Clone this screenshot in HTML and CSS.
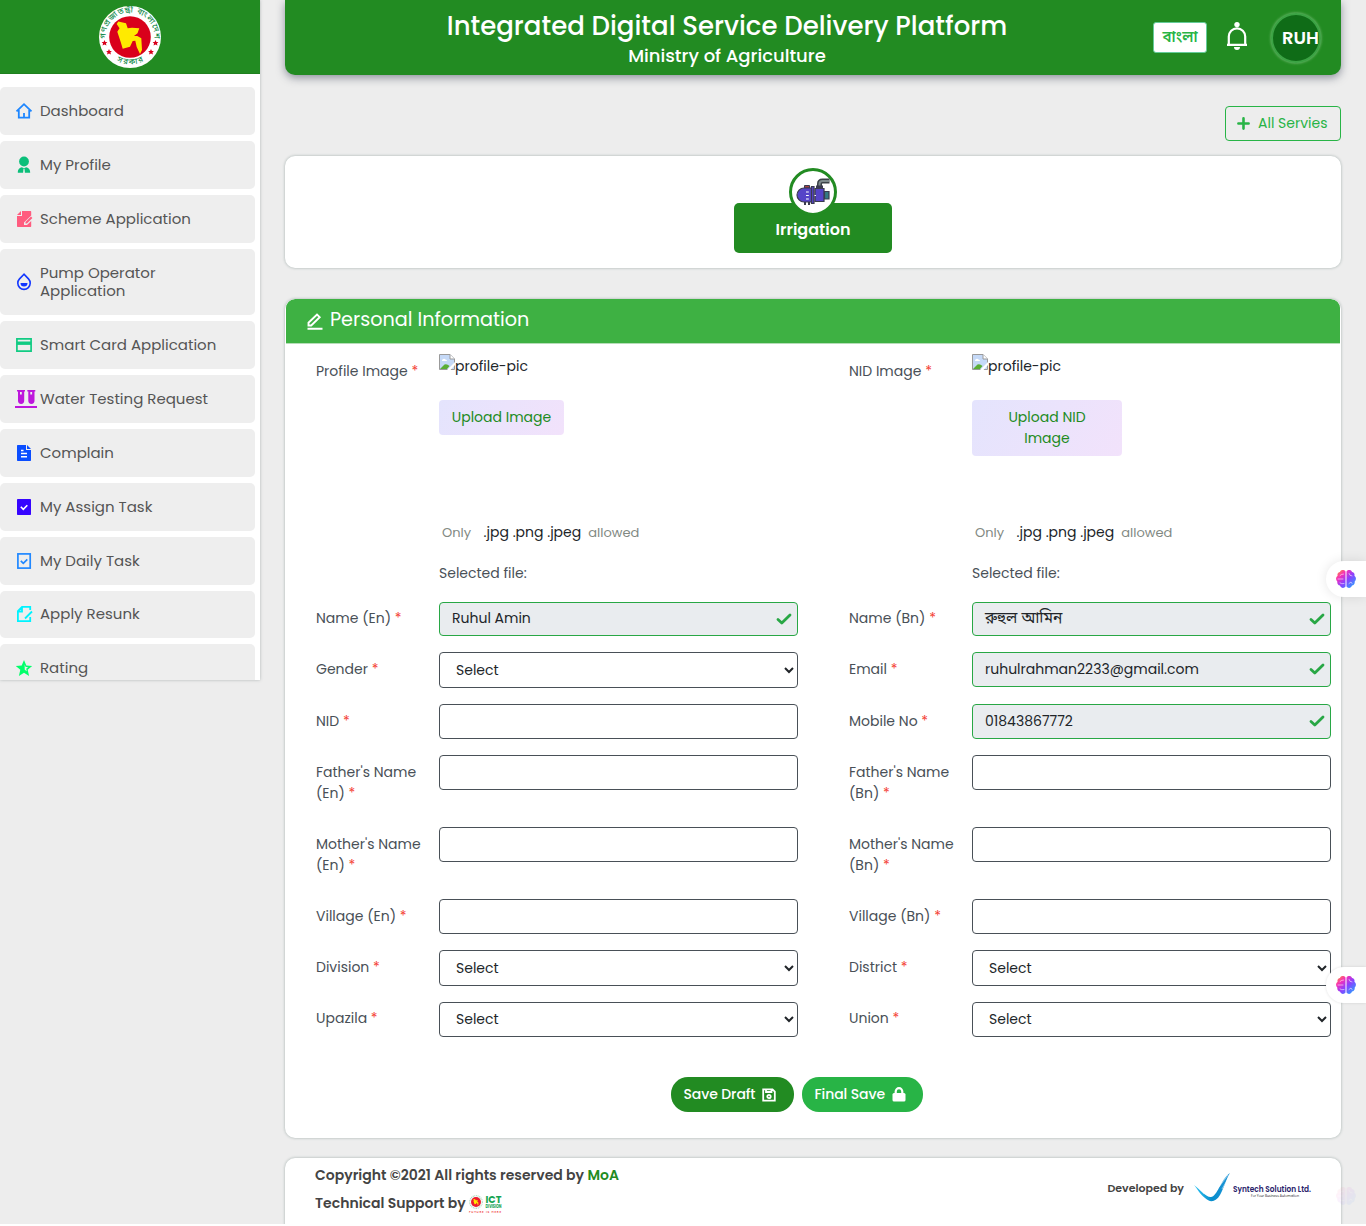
FILE: index.html
```html
<!DOCTYPE html>
<html lang="en">
<head>
<meta charset="utf-8">
<title>Integrated Digital Service Delivery Platform</title>
<link rel="stylesheet" href="styles.css">
</head>
<body>
<svg width="0" height="0" class="defs" aria-hidden="true">
  <defs>
    <linearGradient id="brainfill" x1="0" y1="0" x2="1" y2="1"><stop offset="0" stop-color="#ffa41e"/><stop offset=".28" stop-color="#f62fb8"/><stop offset=".55" stop-color="#8b40ff"/><stop offset="1" stop-color="#16b4ff"/></linearGradient>
    <symbol id="brain" viewBox="0 0 20 20">
      <path fill="url(#brainfill)" d="M9.500 2.500C8 .4 4.800.6 4 3 2 3.200 1 5 1.600 6.800-.4 8.300-.4 11 1.300 12.500 1 14.600 2.200 16.200 4 16.600 4.800 19.400 8.200 19.600 9.500 17.600zM10.500 2.500C12 .4 15.200.6 16 3 18 3.200 19 5 18.400 6.800 20.400 8.300 20.400 11 18.700 12.500 19 14.600 17.800 16.200 16 16.600 15.200 19.400 11.800 19.600 10.500 17.600z"/>
      <path fill="none" stroke="#fff" stroke-opacity=".8" stroke-width=".7" stroke-linecap="round" d="M4 6.500q1.500-1.500 3.500-1.500M2 10h5M4 14q1.500 1.300 4 .6M13 4.500q.3 2.500 3 2.500M13 14.500l2-1.500 1 1.500"/>
    </symbol>
    <symbol id="valid" viewBox="0 0 16 12"><path fill="none" stroke="#28a745" stroke-width="2.800" stroke-linecap="round" stroke-linejoin="round" d="M2 6.500 5.800 10 14 2"/></symbol>
    <symbol id="broken" viewBox="0 0 16 16">
      <path fill="#c5d9f7" stroke="#9a9a9a" d="M.5.5h10.500l4.500 4.500v10.500H.5z"/><path fill="#fff" d="M11 .5V5h4.500zM3 7a2 2 0 0 1 3.500-1.500A1.500 1.500 0 0 1 8 7z"/><path fill="none" stroke="#9a9a9a" d="M11 .5V5h4.500"/><path fill="#5aae36" d="M1 15l4.500-4.500Q8 9.500 10.500 12L8 15z"/><path fill="#fff" d="M8 16l8-8v3l-4.500 5z"/>
    </symbol>
    <path id="land" fill="#ffea00" d="M-11.700-15.500-4-13.700-2.300-8.700 2-9.200 9.300-8.700 7.500-3.700 4-1 7.300-1 11.300 1.300 12 13 10 17 6.700 10 5.300 3.700 2.700 4 0 9.700-7.300 11.700-9.300 5-12.700-5.300-10.500-8.700-13.300-13z"/>
  </defs>
</svg>
<div class="page">
  <aside class="sidebar">
    <div class="brand">
      <svg width="62" height="62" viewBox="-31 -31 62 62">
        <defs><path id="arc-top" d="M-24 5A24.500 24.500 0 1 1 24 5"/><path id="arc-low" d="M-17 21.500A27 27 0 0 0 17 21.500"/></defs>
        <circle r="31" fill="#fff"/><circle r="20.800" fill="#d9001b"/><use href="#land"/>
        <text class="seal"><textPath href="#arc-top" startOffset="50%" text-anchor="middle" textLength="80">গণপ্রজাতন্ত্রী বাংলাদেশ</textPath></text>
        <text class="seal"><textPath href="#arc-low" startOffset="50%" text-anchor="middle" textLength="28">সরকার</textPath></text>
        <g fill="#d9001b"><path id="star" d="M-25.500 3l.9 2h2l-1.500 1.500.6 2.100-2-1.200-2 1.200.6-2.100L-28.400 5h2z"/><use href="#star" x="4.500" y="9"/><use href="#star" x="51"/><use href="#star" x="46.500" y="9"/></g>
      </svg>
    </div>
    <nav class="menu">
      <a class="item"><svg viewBox="0 0 16 16" fill="none" stroke="#1d86ff" stroke-width="1.800"><path d="M.5 8.300 8 1.200l7.500 7.100M2.800 7v7.600h10.400V7M8 15v-5"/></svg><span>Dashboard</span></a>
      <a class="item"><svg viewBox="0 0 16 16" fill="#0bbf7a"><circle cx="8" cy="4.500" r="4.900"/><path d="M1.800 15.700c0-4 2-5 4-5.500l2.200 1 2.200-1c2 .5 4 1.500 4 5.500H8.900l-.4-4h-1l-.4 4z"/></svg><span>My Profile</span></a>
      <a class="item"><svg viewBox="0 0 16 16" fill="#ff5c7f"><path d="M6 0h8.500q.7 0 .7.700V4.500L8 11.500V14h3l4.200-4v5.300q0 .7-.7.700H1.700Q1 16 1 15.300V5h5z"/><path d="M1 4l4-4v4zM9.500 12.500V11L15 5.500l1.400 1.400L11 12.500z"/></svg><span>Scheme Application</span></a>
      <a class="item"><svg viewBox="0 0 16 16"><path fill="none" stroke="#1236ff" stroke-width="1.600" d="M8 .2 3.500 4.900a6.200 6.200 0 1 0 9 0z"/><path fill="#1236ff" d="M4.500 9h7a3.500 3.500 0 0 1-7 0z"/></svg><span>Pump Operator Application</span></a>
      <a class="item"><svg viewBox="0 0 16 16" fill="none" stroke="#11cb83" stroke-width="1.700"><path d="M.9 1.900h14.200v12.200H.9z"/><path stroke-width="3.400" d="M1 6.200h14"/></svg><span>Smart Card Application</span></a>
      <a class="item"><svg class="tubes" viewBox="0 0 22 18" fill="#bd17dc"><path d="M2 0h8v1.500h-.8v9.300a3 3 0 0 1-6.200 0V1.500H2zm3 2v2.600h1.800V2zM12.300 0h8v1.500h-.8v9.300a3 3 0 0 1-6.200 0V1.500h-1zm3 2v2.600h1.800V2zM0 16h22v2H0z"/></svg><span>Water Testing Request</span></a>
      <a class="item"><svg viewBox="0 0 16 16"><path fill="#0a4dff" d="M1.700 0H10v5h5v10.300q0 .7-.7.700H1.700Q1 16 1 15.300V.7Q1 0 1.700 0zM11 0l4 4h-4z"/><path stroke="#fff" stroke-width="1.400" d="M5 5.500h2.500M5 8.500h6M5 11.700h6"/></svg><span>Complain</span></a>
      <a class="item"><svg viewBox="0 0 16 16"><rect x="1" width="14" height="16" rx=".7" fill="#3604ff"/><path fill="none" stroke="#fff" stroke-width="1.600" d="m4.800 7.800 2.500 2.500 4-4"/></svg><span>My Assign Task</span></a>
      <a class="item"><svg viewBox="0 0 16 16" fill="none" stroke="#2188ff" stroke-width="1.700"><rect x="1.900" y=".9" width="12.300" height="14.200"/><path d="m4.800 7.800 2.500 2.500 4-4"/></svg><span>My Daily Task</span></a>
      <a class="item short"><svg viewBox="0 0 16 16" fill="none" stroke="#00f3ff" stroke-width="1.800"><path d="M14.200 4V.9H6L1.900 5v10.100h12.300V11M2 5.500h4V1M9 12.500l7-7"/></svg><span>Apply Resunk</span></a>
      <a class="item"><svg class="wide-star" viewBox="0 0 16 16"><path fill="#00ff6a" d="m8 0 2.300 5.500 5.900.4-4.500 3.900L13.100 16 8 12.700 2.900 16l1.400-6.200L-.2 5.900l5.900-.4z"/><path fill="#eee" d="m8.700 4.500.9 2.400 2.500.2-1.900 1.700.6 2.500-2.100-1.500z"/></svg><span>Rating</span></a>
    </nav>
  </aside>

  <main class="content">
    <header class="topbar">
      <div class="titles"><h1>Integrated Digital Service Delivery Platform</h1><h2>Ministry of Agriculture</h2></div>
      <div class="tools">
        <button class="lang">বাংলা</button>
        <svg class="bell" width="20" height="28" viewBox="0 0 20 28"><circle cx="10" cy="2.600" r="2.700" fill="#fff"/><path fill="none" stroke="#fff" stroke-width="2.200" d="M1.800 23V14.500a8.200 8.200 0 0 1 16.400 0V23M0 22.800h20"/><path fill="#fff" d="M7 25h6a3 3 0 0 1-6 0z"/></svg>
        <div class="avatar">RUH</div>
      </div>
    </header>

    <div class="actions"><button class="all"><svg width="13" height="13" viewBox="0 0 13 13"><path stroke="#28b446" stroke-width="2.600" stroke-linecap="round" d="M6.500 1.400v10.200M1.400 6.500h10.200"/></svg><span>All Servies</span></button></div>

    <section class="card service">
      <div class="pump">
        <svg width="34" height="30" viewBox="0 0 34 30">
          <path fill="none" stroke="#3b4147" stroke-width="5" d="M23.500 12V7q0-3 3-3h7"/><path fill="none" stroke="#7d898c" stroke-width="2" d="M23.500 12V7q0-3 3-3h6.500"/>
          <path fill="#3b3b4f" d="M20 8.500h7V12h-7zM8 25h2v3H8zM12 25h2v3h-2z"/><path fill="#a54343" stroke="#3b3b4f" d="M8.500 8.500h5V11h-5z"/>
          <path fill="#5644c8" stroke="#3b3b4f" stroke-width="1.200" d="M8 11h8v14H8a7 7 0 0 1 0-14zM19 11.500h9v13h-9z"/><path fill="#5644c8" stroke="#3b3b4f" stroke-width="1.200" d="M15.500 9.500H18v17h-2.500z"/>
          <path fill="#337a82" stroke="#3b3b4f" stroke-width="1.200" d="M28.500 14.500h4.500v7.500h-4.500z"/><path stroke="#fff" stroke-width="1.200" d="M10 15h2.800M10 18.500h2.800M10 22h2.800M18.500 18.500H20"/>
        </svg>
      </div>
      <div class="service-name">Irrigation</div>
    </section>

    <section class="card panel">
      <h3 class="panel-head"><svg width="16" height="17" viewBox="0 0 16 17" fill="none" stroke="#fff" stroke-width="1.900"><path d="M1.500 12.500V9.700L10 1.500l2.700 2.700L4.200 12.500zM.5 15.800h15"/></svg><span>Personal Information</span></h3>
      <form class="fields">
        <div class="field upload"><label>Profile Image <i>*</i></label>
          <div class="box"><div class="pic"><svg width="16" height="16"><use href="#broken"/></svg><span>profile-pic</span></div><div class="pick">Upload Image</div><p class="types"><small>Only</small><span>.jpg .png .jpeg</span><small>allowed</small></p><p class="selected">Selected file:</p></div></div>
        <div class="field upload"><label>NID Image <i>*</i></label>
          <div class="box"><div class="pic"><svg width="16" height="16"><use href="#broken"/></svg><span>profile-pic</span></div><div class="pick wide">Upload NID Image</div><p class="types"><small>Only</small><span>.jpg .png .jpeg</span><small>allowed</small></p><p class="selected">Selected file:</p></div></div>

        <div class="field up"><label>Name (En) <i>*</i></label><div class="control filled first"><span>Ruhul Amin</span><svg><use href="#valid"/></svg></div></div>
        <div class="field up"><label>Name (Bn) <i>*</i></label><div class="control filled first"><span class="bn">রুহুল আমিন</span><svg><use href="#valid"/></svg></div></div>

        <div class="field"><label>Gender <i>*</i></label><select><option>Select</option></select></div>
        <div class="field"><label>Email <i>*</i></label><div class="control filled"><span>ruhulrahman2233@gmail.com</span><svg><use href="#valid"/></svg></div></div>

        <div class="field"><label>NID <i>*</i></label><input class="control"></div>
        <div class="field"><label>Mobile No <i>*</i></label><div class="control filled"><span>01843867772</span><svg><use href="#valid"/></svg></div></div>

        <div class="field"><label>Father's Name (En) <i>*</i></label><input class="control"></div>
        <div class="field"><label>Father's Name (Bn) <i>*</i></label><input class="control"></div>
        <div class="field"><label>Mother's Name (En) <i>*</i></label><input class="control"></div>
        <div class="field"><label>Mother's Name (Bn) <i>*</i></label><input class="control"></div>
        <div class="field"><label>Village (En) <i>*</i></label><input class="control"></div>
        <div class="field"><label>Village (Bn) <i>*</i></label><input class="control"></div>
        <div class="field"><label>Division <i>*</i></label><select><option>Select</option></select></div>
        <div class="field"><label>District <i>*</i></label><select><option>Select</option></select></div>
        <div class="field up"><label>Upazila <i>*</i></label><select class="low"><option>Select</option></select></div>
        <div class="field up"><label>Union <i>*</i></label><select class="low"><option>Select</option></select></div>
      </form>
      <div class="submit">
        <button class="draft"><span>Save Draft</span><svg width="14" height="14" viewBox="0 0 14 14" fill="none" stroke="#fff" stroke-width="1.800"><path d="M1.200 1.400h9.300l2.300 2.300v9H1.200zM4 1.500V4h5.500V1.500"/><circle cx="7" cy="8.500" r="1.700"/></svg></button>
        <button class="final"><span>Final Save</span><svg width="14" height="15" viewBox="0 0 14 15"><rect y="6" x=".5" width="13" height="8.500" rx="1.500" fill="#fff"/><path fill="none" stroke="#fff" stroke-width="2.200" d="M3.700 7V4.500a3.300 3.300 0 0 1 6.600 0V7"/></svg></button>
      </div>
    </section>

    <footer class="card footer">
      <div class="legal"><p>Copyright ©2021 All rights reserved by <b>MoA</b></p>
        <p class="support">Technical Support by <svg width="34" height="20" viewBox="0 0 34 20"><circle cx="7" cy="8" r="6.300" fill="#fff" stroke="#abd9bd" stroke-width="1.200" stroke-dasharray="1 .7"/><circle cx="7" cy="8" r="5" fill="#ed1c2e"/><use href="#land" transform="translate(7 8) scale(.2)"/><text x="16.500" y="9" class="ict" textLength="16" lengthAdjust="spacingAndGlyphs">ICT</text><text x="16.500" y="13.500" class="ict-sub" textLength="16" lengthAdjust="spacingAndGlyphs">DIVISION</text><text x="0" y="18.500" class="ict-tag" textLength="32">FUTURE IS HERE</text></svg></p></div>
      <div class="dev"><span>Developed by</span>
        <svg width="120" height="32" viewBox="0 0 120 32"><defs><linearGradient id="tick"><stop offset="0" stop-color="#31c6f4"/><stop offset=".5" stop-color="#078dcc"/><stop offset="1" stop-color="#2196d8"/></linearGradient></defs><path fill="url(#tick)" d="M0 13C7 18 12 25.500 17 25 23 25 27 7 36 1 32 7 31 14 26 23 22 30 16 31 11 26 6 22 4 18 0 13z"/><path stroke="#fff" stroke-width=".5" fill="none" d="M2 13l8 9M25 15 34 3M28 17l7-12"/><text x="39" y="19.500" class="syn" textLength="78" lengthAdjust="spacingAndGlyphs">Syntech Solution Ltd.</text><text x="57" y="24.500" class="syn-sub" textLength="48" lengthAdjust="spacingAndGlyphs">For Your Business Automation</text></svg>
      </div>
    </footer>
  </main>
</div>
<div class="assistant one"><svg width="20" height="20"><use href="#brain"/></svg></div>
<div class="assistant two"><svg width="20" height="20"><use href="#brain"/></svg></div>
<div class="assistant ghost"><svg width="20" height="20"><use href="#brain"/></svg></div>
</body>
</html>
```
FILE: styles.css
```css
* { box-sizing: border-box; }
body { margin: 0; background: #fff; font-family: Poppins, Inter, "Noto Sans Bengali", sans-serif; font-size: 14px; line-height: 21px; color: #212529; position: relative; overflow: hidden; }
p, h1, h2, h3 { margin: 0; }
button, input, select { font: inherit; letter-spacing: inherit; margin: 0; }
.defs { position: absolute; }
.page { display: flex; gap: 25px; height: 1224px; background: #ededed; overflow: hidden; }

.sidebar { width: 260px; height: 680px; background: #fff; overflow: hidden; box-shadow: 0 0 3px rgba(60, 80, 80, .35); }
.brand { height: 74px; background: #228b22; display: flex; justify-content: center; padding-top: 6px; border-bottom: 1px solid #1f7f1f; }
.seal { font-size: 8px; font-weight: 500; fill: #118b4b; }
.menu { display: flex; flex-direction: column; gap: 6px; padding-top: 13px; }
.item { display: flex; align-items: center; gap: 8px; flex: none; width: 255px; min-height: 48px; padding: 15px 60px 15px 16px; border-radius: 5px; background: #eee; color: #555; font-size: 15px; line-height: 18px; }
.item span { white-space: nowrap; }
.item:nth-child(4) span { white-space: normal; width: 125px; }
.item.short { min-height: 47px; padding-block: 14px 15px; }
.item svg { width: 16px; height: 16px; flex: none; overflow: visible; }
.item .tubes { width: 22px; height: 18px; margin: 0 -5px 0 -1px; }

.content { width: 1056px; display: flex; flex-direction: column; }
.topbar { height: 75px; flex: none; display: flex; background: #228b22; border-radius: 0 0 10px 10px; box-shadow: 0 3px 9px rgba(50, 60, 80, .5); color: #fff; }
.titles { width: 884px; text-align: center; padding-top: 9px; white-space: nowrap; }
h1 { font-size: 26px; line-height: 34px; font-weight: 500; }
h2 { font-size: 18px; line-height: 26px; font-weight: 500; }
.tools { display: flex; align-items: center; margin-left: -16px; }
.lang { width: 54px; height: 31px; padding: 0 0 2px; background: #fff; border: 1px solid #64cc9a; border-radius: 3px; color: #28b446; font-size: 15px; font-weight: 600; }
.bell { margin: -3px 24px 0 20px; overflow: visible; }
.avatar { width: 50px; height: 50px; border: 2px solid #3ba344; border-radius: 50%; background: #0f6c17; box-shadow: 0 0 3px #8bc98b; font-size: 18px; font-weight: 600; line-height: 46px; padding-left: 9px; overflow: hidden; }
.actions { display: flex; justify-content: flex-end; margin: 31px 0 15px; }
.all { width: 116px; height: 35px; display: flex; align-items: center; gap: 8px; padding: 0 0 0 11px; border: 1px solid #28b446; border-radius: 4px; background: transparent; color: #28b446; white-space: nowrap; }

.card { background: #fff; border-radius: 10px; box-shadow: 0 0 3px rgba(50, 80, 75, .4); flex: none; }
.service { height: 112px; display: flex; flex-direction: column; align-items: center; padding-top: 12px; }
.pump { z-index: 1; width: 48px; height: 48px; border: 3px solid #228b22; border-radius: 50%; background: #fff; display: flex; align-items: center; justify-content: center; }
.service-name { width: 158px; height: 50px; margin-top: -13px; border-radius: 5px; background: #228b22; color: #fff; font-size: 16px; font-weight: 600; text-align: center; line-height: 53px; }

.panel { height: 839px; margin-top: 31px; overflow: hidden; }
.panel-head { height: 45px; margin: 0 1px; border-bottom: 1px solid #b6ddb8; border-radius: 9px 9px 0 0; background: #3eb143; color: #fff; font-size: 19.200px; font-weight: 400; display: flex; align-items: center; gap: 7px; padding: 0 0 4px 21px; }
.panel-head svg { margin-top: 4px; }
.fields { display: grid; grid-template-columns: 533px 533px; grid-template-rows: 258px 50px 52px 51px 72px 72px 51px 52px 51px; padding-left: 31px; }
.field { display: flex; align-items: flex-start; }
label { width: 123px; padding: 7px 14px 0 0; color: #495057; }
.field.up label { padding-top: 6px; }
.field.upload label { padding-top: 17px; }
label i { color: #f44336; font-style: normal; }
.control, select { width: 359px; height: 35px; border: 1px solid #495057; border-radius: 4px; background: #fff; color: #212529; }
.control { padding: 0 5px 0 12px; display: flex; align-items: center; justify-content: space-between; }
.filled { background: #e9ecef; border-color: #28a745; padding-bottom: 1px; }
.filled.first { height: 34px; }
.filled svg { width: 16px; height: 12px; }
.bn { font-size: 15.500px; margin-top: -2px; }
select { height: 36px; padding: 0 0 0 12px; }
select.low { height: 35px; padding-bottom: 1px; }
.pic { display: flex; height: 34px; margin: 10px 0 12px; }
.pic span { padding-top: 2px; }
.pick { width: 125px; height: 35px; padding: 7px 12px; border-radius: 4px; text-align: center; white-space: nowrap; background: linear-gradient(120deg, #e4e4fd, #f2e2fb); color: #228b22; }
.pick.wide { width: 150px; height: 56px; white-space: normal; padding: 7px 30px; margin-bottom: -21px; }
.types { display: flex; margin: 87px 0 20px; padding-left: 3px; white-space: nowrap; }
.types small { font-size: 13px; color: #828983; }
.types span { margin: 0 7px 0 12.500px; }
.selected { color: #495057; }
.submit { display: flex; justify-content: center; gap: 8px; margin: 24px 32px 0 0; }
.submit button { height: 35px; border: 0; border-radius: 17px; color: #fff; font-weight: 500; letter-spacing: -.1px; display: flex; align-items: center; gap: 7px; padding: 0 0 0 12.500px; white-space: nowrap; }
.submit .draft { width: 123px; background: #228b22; }
.submit .final { width: 121px; background: #28b446; }

.footer { height: 80px; margin-top: 20px; padding: 7px 30px; display: flex; justify-content: space-between; }
.legal { color: #444; font-weight: 600; }
.legal b { color: #228b22; font-weight: 600; }
.support { display: flex; align-items: center; gap: 3px; margin-top: 7px; }
.support svg { overflow: visible; }
.dev { display: flex; gap: 10px; height: 46px; align-items: center; color: #444; font-size: 11px; font-weight: 600; margin-right: -3px; }
.ict { font-size: 11px; font-weight: 700; fill: #14a451; }
.ict-sub { font-size: 4.500px; font-weight: 700; fill: #14a451; }
.ict-tag { font-size: 3px; fill: #f15b5b; }
.syn { font-size: 8px; font-weight: 600; fill: #28226a; }
.syn-sub { font-size: 3.800px; font-weight: 400; fill: #333; }

.assistant { position: absolute; right: 0; width: 40px; height: 36px; padding: 8px 10px; border-radius: 18px 0 0 18px; background: #fff; box-shadow: 0 0 12px rgba(0, 0, 0, .1); }
.assistant svg { display: block; }
.one { top: 561px; }
.two { top: 967px; box-shadow: 0 0 3px rgba(0, 0, 0, .12); }
.ghost { top: 1178px; background: transparent; box-shadow: none; opacity: .06; }
```
